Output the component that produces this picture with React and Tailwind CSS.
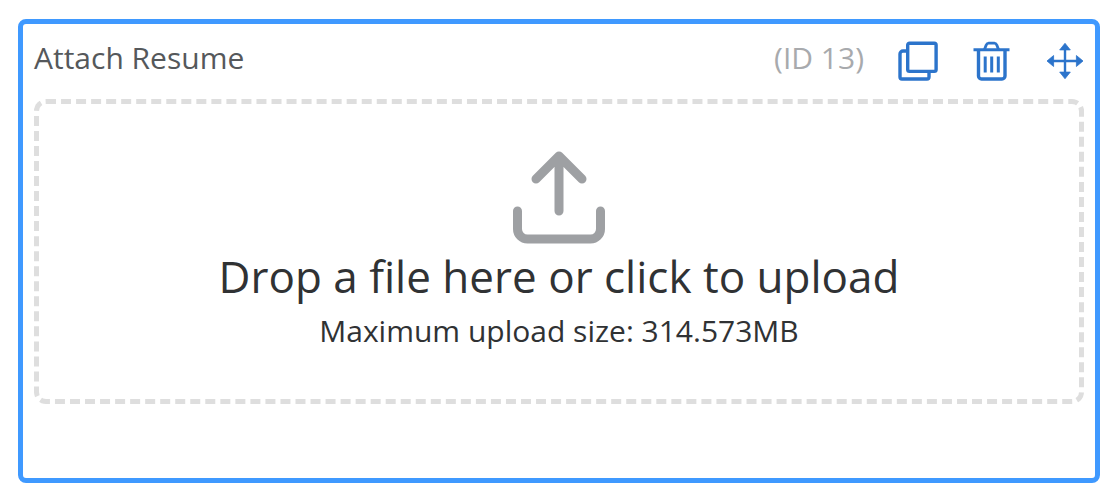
import React, { useState } from "react";

function CopyIcon() {
  return (
    <svg className="w-10 h-10" viewBox="0 0 40 40" fill="none" stroke="currentColor" strokeWidth="3.4" strokeLinejoin="round" aria-hidden="true">
      <path d="M9 10H5a3 3 0 0 0-3 3v23a2 2 0 0 0 2 2h25a2 2 0 0 0 2-2v-5" />
      <rect x="9.7" y="2.2" width="28.4" height="28.2" rx="1.8" />
    </svg>
  );
}

function TrashIcon() {
  return (
    <svg className="w-10 h-10" viewBox="0 0 40 40" fill="none" stroke="currentColor" aria-hidden="true">
      <path strokeWidth="3" d="M1.5 8.8h36" />
      <path strokeWidth="2.8" d="M12.5 8.5l1.6-4.2A3 3 0 0 1 16.7 2.2h5.6a3 3 0 0 1 2.6 2.1L26.5 8.5" />
      <path strokeWidth="3.4" d="M6.5 9v26a3 3 0 0 0 3 3h20.5a3 3 0 0 0 3-3V9" />
      <path strokeWidth="3" d="M13.2 15.5v16M19.7 15.5v16M26.3 15.5v16" />
    </svg>
  );
}

function MoveIcon() {
  return (
    <svg className="w-10 h-10" viewBox="0 0 40 40" fill="currentColor" stroke="currentColor" aria-hidden="true">
      <path strokeWidth="2.4" d="M19 6v28M5 20h28" />
      <path strokeWidth="0.8" strokeLinejoin="round" d="M19 2.3l5.3 6.6H13.7zM19 37.7l5.3-6.6H13.7zM1 20l6.6-5.5v11zM37 20l-6.6-5.5v11z" />
    </svg>
  );
}

function UploadIcon() {
  return (
    <svg className="w-24 h-24 text-[#9ea0a3]" viewBox="0 0 96 96" fill="none" stroke="currentColor" strokeWidth="9" strokeLinecap="round" strokeLinejoin="round" aria-hidden="true">
      <path d="M48 61V7M25 29L48 6l23 23" />
      <path d="M6.5 61v18a10 10 0 0 0 10 10h63a10 10 0 0 0 10-10V61" />
    </svg>
  );
}

const actions = [
  { label: "Duplicate field", Icon: CopyIcon },
  { label: "Delete field", Icon: TrashIcon },
  { label: "Move field", Icon: MoveIcon },
];

export default function App() {
  const [, setFile] = useState(null);

  return (
    <div className="min-h-screen bg-white pt-[19px] pb-4 pl-[18px] pr-4 font-['Open_Sans','Noto_Sans',sans-serif]">
      <section className="rounded-lg border-5 border-[#3f99ff] pb-[74px]">
        <header className="flex items-start justify-between h-[75px] pt-[14px] pl-[11px] pr-[9px]">
          <h2 className="text-[30px] leading-10 text-[#55585b]">Attach Resume</h2>
          <div className="flex items-start gap-[34px]">
            <span className="text-[30px] leading-10 text-[#a8aaad]">(ID 13)</span>
            {actions.map(({ label, Icon }) => (
              <button key={label} type="button" aria-label={label} className="pt-[3px] text-[#2c74cb] cursor-pointer">
                <Icon />
              </button>
            ))}
          </div>
        </header>

        <label className="mx-[11px] flex flex-col items-center rounded-xl border-5 border-dashed border-[#dedede] pt-[46px] pb-[47px] text-[#303234] text-center cursor-pointer">
          <input type="file" className="sr-only" onChange={(e) => setFile(e.target.files[0])} />
          <UploadIcon />
          <span className="text-[44px] leading-[60px]">Drop a file here or click to upload</span>
          <span className="mt-1 text-[30px] leading-[42px]">Maximum upload size: 314.573MB</span>
        </label>
      </section>
    </div>
  );
}
